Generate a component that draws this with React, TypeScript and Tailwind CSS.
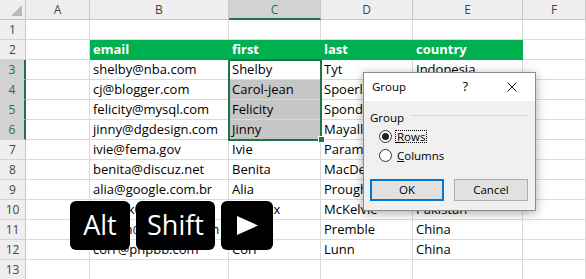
import { Fragment } from "react";

const COLS = ["A", "B", "C", "D", "E", "F"];

// rows 1..13 of the sheet, columns A..F
const DATA: string[][] = [
  ["", "", "", "", "", ""],
  ["", "email", "first", "last", "country", ""],
  ["", "shelby@nba.com", "Shelby", "Tyt", "Indonesia", ""],
  ["", "cj@blogger.com", "Carol-jean", "Spoerling", "Philippines", ""],
  ["", "felicity@mysql.com", "Felicity", "Spondley", "Russia", ""],
  ["", "jinny@dgdesign.com", "Jinny", "Mayalls", "Sweden", ""],
  ["", "ivie@fema.gov", "Ivie", "Paramore", "Brazil", ""],
  ["", "benita@discuz.net", "Benita", "MacDermid", "Poland", ""],
  ["", "alia@google.com.br", "Alia", "Proughten", "Portugal", ""],
  ["", "bdrack0@wsj.com", "Hendrix", "McKelvie", "Pakistan", ""],
  ["", "kprem@usnews.com", "Kip", "Premble", "China", ""],
  ["", "corr@phpbb.com", "Corr", "Lunn", "China", ""],
  ["", "", "", "", "", ""],
];

const isSelRow = (r: number) => r >= 3 && r <= 6;

function cellClass(r: number, c: number) {
  if (r === 2 && c >= 1 && c <= 4) {
    return "border-r border-b border-[#00b050] bg-[#00b050] pl-[3px] leading-[19px] font-bold text-white overflow-hidden whitespace-nowrap";
  }
  if (c === 2 && r >= 4 && r <= 6) {
    return "border-r border-b border-[#d9d9d9] bg-[#c6c6c6] pl-[3px] leading-[19px] text-black overflow-hidden whitespace-nowrap";
  }
  return "border-r border-b border-[#dadada] bg-white pl-[3px] leading-[19px] text-black overflow-hidden whitespace-nowrap";
}

function Sheet() {
  return (
    <div className="grid grid-cols-[26px_64px_139px_92px_92px_110px_1fr] auto-rows-[20px] font-['Open_Sans',sans-serif] text-[13px]">
      {/* corner */}
      <div className="border-r border-b border-[#c8c8c8] bg-[#efefef]">
        <svg width="25" height="19" viewBox="0 0 25 19">
          <polygon points="22,5 22,16 11,16" fill="#b9b9b9" />
        </svg>
      </div>
      {COLS.map((col, c) => (
        <div
          key={col}
          className={
            c === 2
              ? "flex items-center justify-center pt-[1px] border-r border-r-[#c8c8c8] border-b-2 border-b-[#217346] bg-[#d2d2d2] text-[12px] text-[#217346]"
              : "flex items-center justify-center pt-[1px] border-r border-b border-[#c8c8c8] bg-[#efefef] text-[12px] text-[#444]"
          }
        >
          {col}
        </div>
      ))}

      {DATA.map((row, i) => {
        const r = i + 1;
        return (
          <Fragment key={r}>
            <div
              className={
                isSelRow(r)
                  ? "flex items-center justify-center border-r-2 border-r-[#217346] border-b border-b-[#d4d4d4] bg-[#d2d2d2] text-[12px] text-[#217346]"
                  : "flex items-center justify-center border-r border-r-[#c8c8c8] border-b border-b-[#d4d4d4] bg-[#efefef] text-[12px] text-[#444]"
              }
            >
              {r}
            </div>
            {row.map((v, c) => (
              <div key={c} className={cellClass(r, c)}>
                {v}
              </div>
            ))}
          </Fragment>
        );
      })}
    </div>
  );
}

function GroupDialog() {
  return (
    <div className="absolute left-[363px] top-[72px] w-[173px] h-[139px] border border-[#8c8c8c] bg-[#f0f0f0] shadow-[0_2px_10px_rgba(0,0,0,0.35)] font-['Open_Sans',sans-serif] text-[11.5px] text-black">
      {/* title bar */}
      <div className="h-[28px] bg-white flex items-center pl-[8px]">
        <span className="flex-1">Group</span>
        <span className="mr-[39px] text-[13px]">?</span>
        <svg className="mr-[18px]" width="10" height="10" viewBox="0 0 10 10">
          <path d="M0.5 0.5 L9.5 9.5 M9.5 0.5 L0.5 9.5" stroke="#111" strokeWidth="1" />
        </svg>
      </div>

      <div className="px-[6px] pt-[8px]">
        <div className="flex items-center h-[17px] pr-[1px]">
          <span>Group</span>
          <div className="ml-[6px] mb-[5px] flex-1 h-px bg-[#d6d6d6]" />
        </div>

        <div className="mt-[1px] h-[19px] flex items-center pl-[9px]">
          <span className="w-[13px] h-[13px] rounded-full border border-[#333] bg-white flex items-center justify-center">
            <span className="w-[7px] h-[7px] rounded-full bg-[#222]" />
          </span>
          <span className="ml-[3px] h-[13px] leading-[11px] px-[1px] border border-dotted border-black">
            <u>R</u>ows
          </span>
        </div>
        <div className="h-[19px] flex items-center pl-[9px]">
          <span className="w-[13px] h-[13px] rounded-full border border-[#333] bg-white" />
          <span className="ml-[5px]">
            <u>C</u>olumns
          </span>
        </div>

        <div className="mt-[14px] flex gap-[10px]">
          <button className="w-[74px] h-[22px] border-2 border-[#0078d7] bg-[#e1e1e1] text-[11.5px]">
            OK
          </button>
          <button className="w-[74px] h-[22px] border border-[#adadad] bg-[#e1e1e1] text-[11.5px]">
            Cancel
          </button>
        </div>
      </div>
    </div>
  );
}

function Keys() {
  return (
    <div className="absolute left-[70px] top-[201px] flex gap-[6px] font-['Open_Sans',sans-serif] text-[27px] text-white">
      <div className="w-[60px] h-[49px] rounded-[6px] bg-black flex items-center justify-center">Alt</div>
      <div className="w-[79px] h-[49px] rounded-[6px] bg-black flex items-center justify-center">Shift</div>
      <div className="w-[52px] h-[49px] rounded-[6px] bg-black flex items-center justify-center">
        <svg width="21" height="19" viewBox="0 0 21 19">
          <polygon points="0,0 21,9.5 0,19" fill="white" />
        </svg>
      </div>
    </div>
  );
}

export default function App() {
  return (
    <div className="relative w-[586px] h-[279px] overflow-hidden bg-white">
      <Sheet />

      {/* selected range C3:C6 */}
      <div className="absolute left-[228px] top-[59px] w-[94px] h-[82px] border-2 border-[#217346] pointer-events-none" />
      <div className="absolute left-[318px] top-[136px] w-[7px] h-[7px] bg-[#217346] border border-white" />

      <GroupDialog />
      <Keys />
    </div>
  );
}
